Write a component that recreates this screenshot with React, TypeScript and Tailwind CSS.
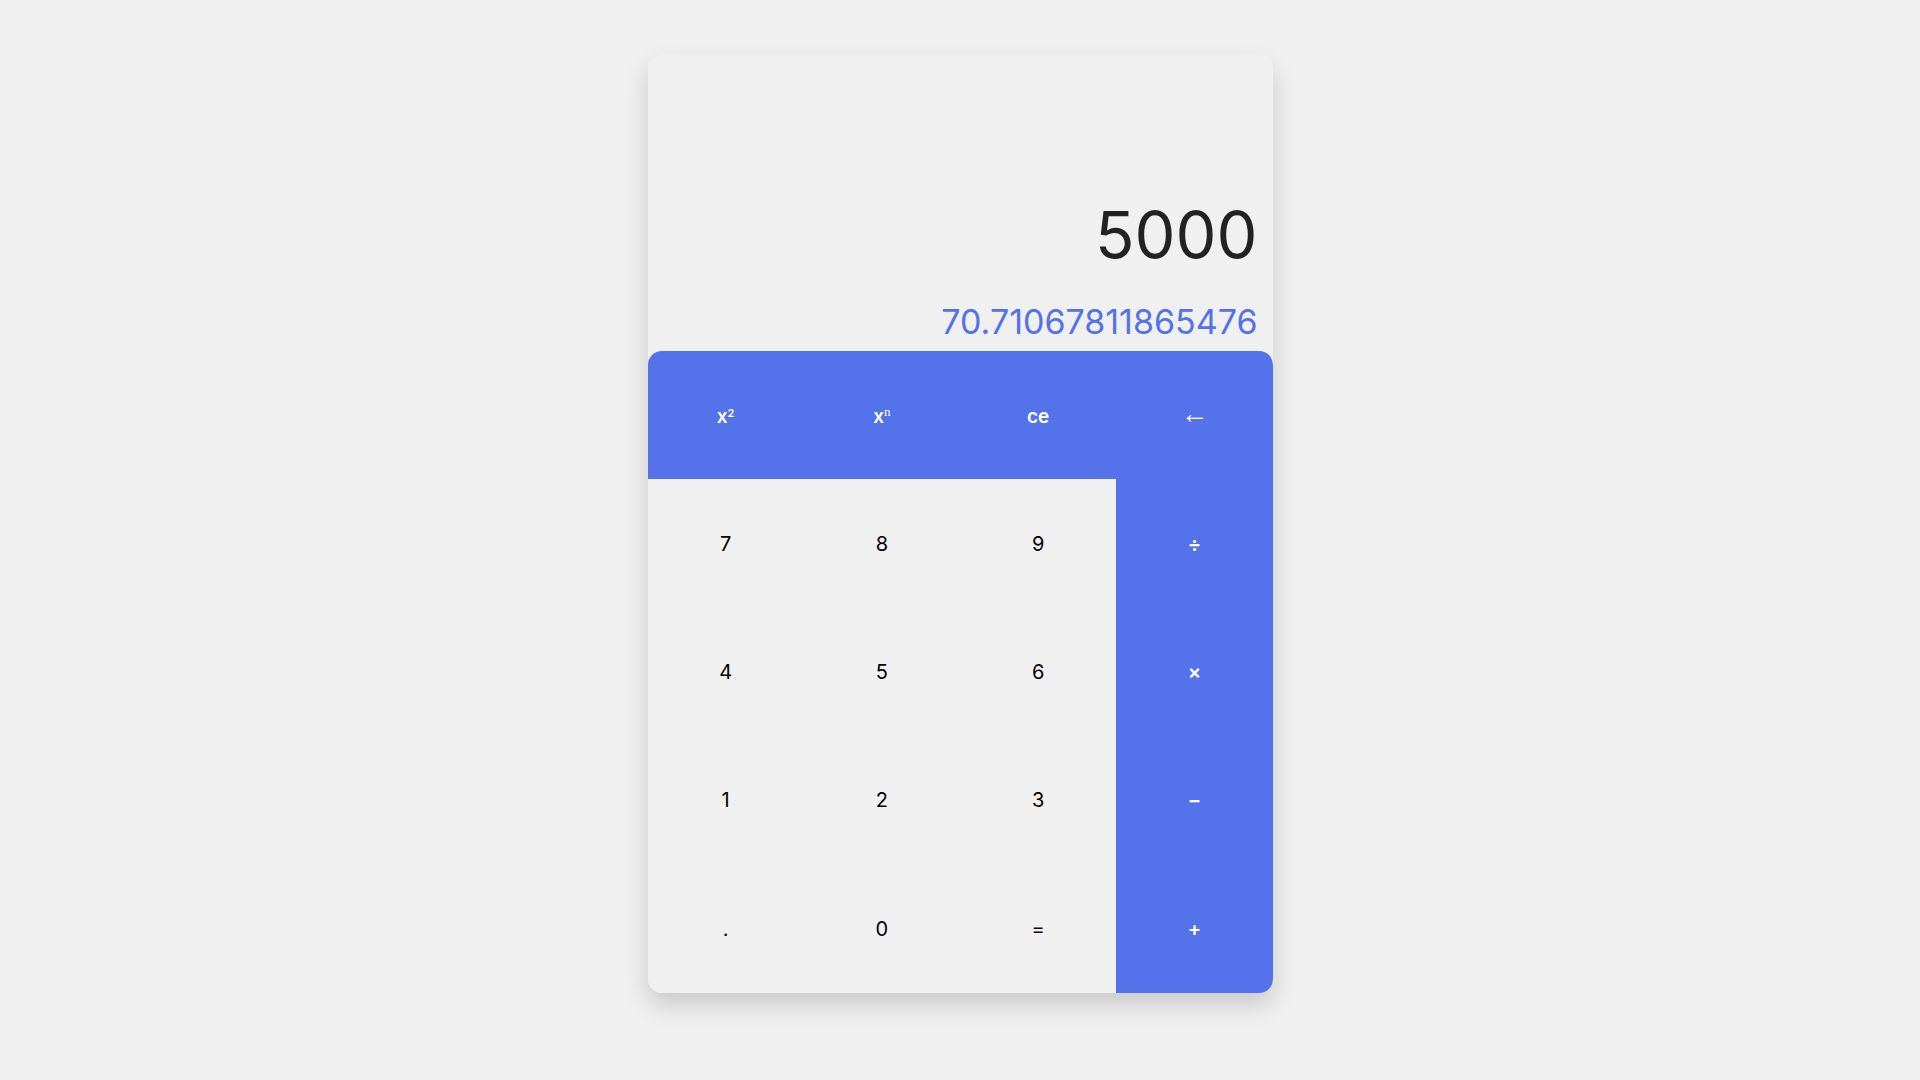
const keys: { label: React.ReactNode; kind: 'top' | 'num' | 'op' }[] = [
  { label: <span>x<sup className="text-[11px]">2</sup></span>, kind: 'top' },
  { label: <span>x<sup className="text-[13px] font-normal" style={{ fontFamily: '"Liberation Serif", serif' }}>n</sup></span>, kind: 'top' },
  { label: 'ce', kind: 'top' },
  { label: <span className="font-normal text-[28px] leading-none -mt-[6px]" style={{ fontFamily: '"Liberation Sans", sans-serif' }}>←</span>, kind: 'top' },
  { label: '7', kind: 'num' },
  { label: '8', kind: 'num' },
  { label: '9', kind: 'num' },
  { label: '÷', kind: 'op' },
  { label: '4', kind: 'num' },
  { label: '5', kind: 'num' },
  { label: '6', kind: 'num' },
  { label: '×', kind: 'op' },
  { label: '1', kind: 'num' },
  { label: '2', kind: 'num' },
  { label: '3', kind: 'num' },
  { label: '−', kind: 'op' },
  { label: '.', kind: 'num' },
  { label: '0', kind: 'num' },
  { label: '=', kind: 'num' },
  { label: '+', kind: 'op' },
];

export default function App() {
  return (
    <div className="min-h-screen w-full bg-[#f0f0f0] flex justify-center pt-[54px]" style={{ fontFamily: 'Inter, "Open Sans", sans-serif' }}>
      <div className="w-[625px] h-[939px] rounded-[14px] bg-[#f0f0f0] shadow-[0_12px_24px_rgba(0,0,0,0.16)] flex flex-col overflow-hidden">
        {/* display */}
        <div className="h-[297px] flex flex-col justify-end items-end pr-[15px] pb-[12px]">
          <div className="text-[65px] leading-none text-[#222]">5000</div>
          <div className="text-[34px] leading-none text-[#5472ea] mt-[38px]">70.71067811865476</div>
        </div>
        {/* keypad */}
        <div className="flex-1 grid grid-cols-4 grid-rows-5 rounded-t-[14px] overflow-hidden">
          {keys.map((k, i) => (
            <button
              key={i}
              className={
                k.kind === 'num'
                  ? 'flex items-center justify-center bg-[#f0f0f0] text-black text-[20px]'
                  : k.kind === 'op'
                  ? 'flex items-center justify-center bg-[#5472ea] text-white text-[20px] font-semibold'
                  : 'flex items-center justify-center bg-[#5472ea] text-white text-[19px] font-semibold pt-[4px]'
              }
            >
              {k.label}
            </button>
          ))}
        </div>
      </div>
    </div>
  );
}
